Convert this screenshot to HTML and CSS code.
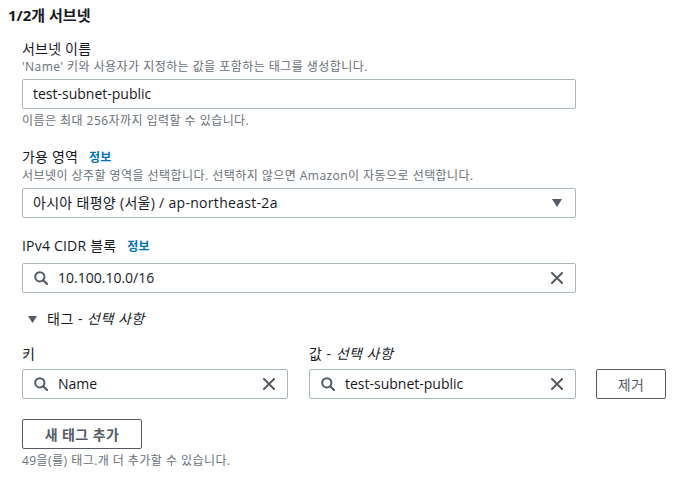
FILE: index.html
```html
<!DOCTYPE html>
<html lang="ko">
<head>
<meta charset="utf-8">
<link rel="stylesheet" href="styles.css">
</head>
<body>
<div class="page">
  <h2 class="title">1/2개 서브넷</h2>
  <div class="fields">
    <div class="field">
      <div class="label">서브넷 이름</div>
      <div class="desc">'Name' 키와 사용자가 지정하는 값을 포함하는 태그를 생성합니다.</div>
      <div class="input"><span class="val">test-subnet-public</span></div>
      <div class="hint">이름은 최대 256자까지 입력할 수 있습니다.</div>
    </div>
    <div class="field">
      <div class="label">가용 영역 <a class="info">정보</a></div>
      <div class="desc">서브넷이 상주할 영역을 선택합니다. 선택하지 않으면 Amazon이 자동으로 선택합니다.</div>
      <div class="input select"><span class="val wide">아시아 태평양 (서울) / ap-northeast-2a</span>
        <svg class="caret" width="10" height="8" viewBox="0 0 10 8"><path d="M0 0 H10 L5 8 Z" fill="#545b64"/></svg>
      </div>
    </div>
    <div class="field">
      <div class="label label-gap">IPv4 CIDR 블록 <a class="info">정보</a></div>
      <div class="input search">
        <svg class="icon" width="14" height="14" viewBox="0 0 14 14"><circle cx="5.8" cy="5.8" r="4.6" fill="none" stroke="#545b64" stroke-width="2"/><path d="M9.2 9.2 L13 13" stroke="#545b64" stroke-width="2.2" stroke-linecap="round"/></svg>
        <span class="val grow">10.100.10.0/16</span>
        <svg class="clear" width="12" height="12" viewBox="0 0 12 12"><path d="M1 1 L11 11 M11 1 L1 11" stroke="#545b64" stroke-width="2" stroke-linecap="round"/></svg>
      </div>
    </div>
    <div class="toggle">
      <svg class="tri" width="9" height="7" viewBox="0 0 9 7"><path d="M0 0 H9 L4.5 7 Z" fill="#545b64"/></svg>
      <span>태그 - <i>선택 사항</i></span>
    </div>
    <div class="tags">
      <div class="tag-col">
        <div class="label">키</div>
        <div class="input search">
          <svg class="icon" width="14" height="14" viewBox="0 0 14 14"><circle cx="5.8" cy="5.8" r="4.6" fill="none" stroke="#545b64" stroke-width="2"/><path d="M9.2 9.2 L13 13" stroke="#545b64" stroke-width="2.2" stroke-linecap="round"/></svg>
          <span class="val grow">Name</span>
          <svg class="clear" width="12" height="12" viewBox="0 0 12 12"><path d="M1 1 L11 11 M11 1 L1 11" stroke="#545b64" stroke-width="2" stroke-linecap="round"/></svg>
        </div>
      </div>
      <div class="tag-col">
        <div class="label spaced">값 - <i>선택 사항</i></div>
        <div class="input search">
          <svg class="icon" width="14" height="14" viewBox="0 0 14 14"><circle cx="5.8" cy="5.8" r="4.6" fill="none" stroke="#545b64" stroke-width="2"/><path d="M9.2 9.2 L13 13" stroke="#545b64" stroke-width="2.2" stroke-linecap="round"/></svg>
          <span class="val grow">test-subnet-public</span>
          <svg class="clear" width="12" height="12" viewBox="0 0 12 12"><path d="M1 1 L11 11 M11 1 L1 11" stroke="#545b64" stroke-width="2" stroke-linecap="round"/></svg>
        </div>
      </div>
      <div class="tag-btn">
        <button class="btn remove">제거</button>
      </div>
    </div>
    <button class="btn add">새 태그 추가</button>
    <div class="hint">49을(를) 태그.개 더 추가할 수 있습니다.</div>
  </div>
</div>
</body>
</html>
```
FILE: styles.css
```css
* { box-sizing: border-box; }
body {
  margin: 0;
  background: #ffffff;
  font-family: "Open Sans", "Noto Sans CJK KR", sans-serif;
  color: #16191f;
  font-size: 14px;
}
.page {
  padding: 4px 8px 0 8px;
}
.title {
  margin: 0;
  font-size: 15px;
  font-weight: 700;
  line-height: 22px;
}
.fields {
  padding-left: 14px;
  width: 568px;
}
.field {
  margin-top: 13px;
}
.field + .field {
  margin-top: 18px;
}
.label {
  font-size: 14px;
  line-height: 20px;
  letter-spacing: 0.2px;
}
.label-gap {
  margin-bottom: 6px;
}
.info {
  color: #0073bb;
  font-size: 12px;
  font-weight: 700;
  margin-left: 7px;
}
.desc {
  font-size: 12px;
  line-height: 16px;
  color: #687078;
  margin-bottom: 4px;
  letter-spacing: 0.45px;
}
.hint {
  font-size: 12px;
  line-height: 16px;
  color: #687078;
  margin-top: 4px;
  letter-spacing: 0.45px;
}
.input {
  display: flex;
  align-items: center;
  height: 30px;
  border: 1px solid #aab7b8;
  border-radius: 2px;
  padding: 0 10px;
  background: #fff;
}
.val {
  font-size: 14px;
  line-height: 20px;
  color: #16191f;
}
.wide { letter-spacing: 0.3px; }
.grow { flex: 1; }
.select { justify-content: space-between; }
.caret { margin-right: 3px; }
.search .icon { margin-right: 10px; margin-left: 1px; }
.search .clear { margin-right: 2px; }
.toggle {
  display: flex;
  align-items: center;
  margin-top: 16px;
  padding-left: 6px;
  font-size: 14px;
  line-height: 20px;
  color: #16191f;
  letter-spacing: 0.5px;
}
.toggle .tri { margin-right: 10px; }
.spaced { letter-spacing: 0.5px; }
.tags {
  display: flex;
  margin-top: 15px;
  width: 644px;
}
.tag-col {
  width: 266px;
  margin-right: 21px;
}
.tag-col + .tag-col {
  width: 267px;
  margin-right: 20px;
}
.tag-col .label {
  margin-bottom: 5px;
}
.tag-btn {
  display: flex;
  align-items: flex-end;
}
.btn {
  height: 30px;
  border: 1px solid #545b64;
  border-radius: 2px;
  background: #fff;
  color: #545b64;
  font-family: "Open Sans", "Noto Sans CJK KR", sans-serif;
  font-size: 14px;
  padding: 0;
  letter-spacing: 0.4px;
}
.remove { width: 70px; }
.add {
  width: 120px;
  margin-top: 20px;
  font-weight: 700;
  display: block;
}
```
